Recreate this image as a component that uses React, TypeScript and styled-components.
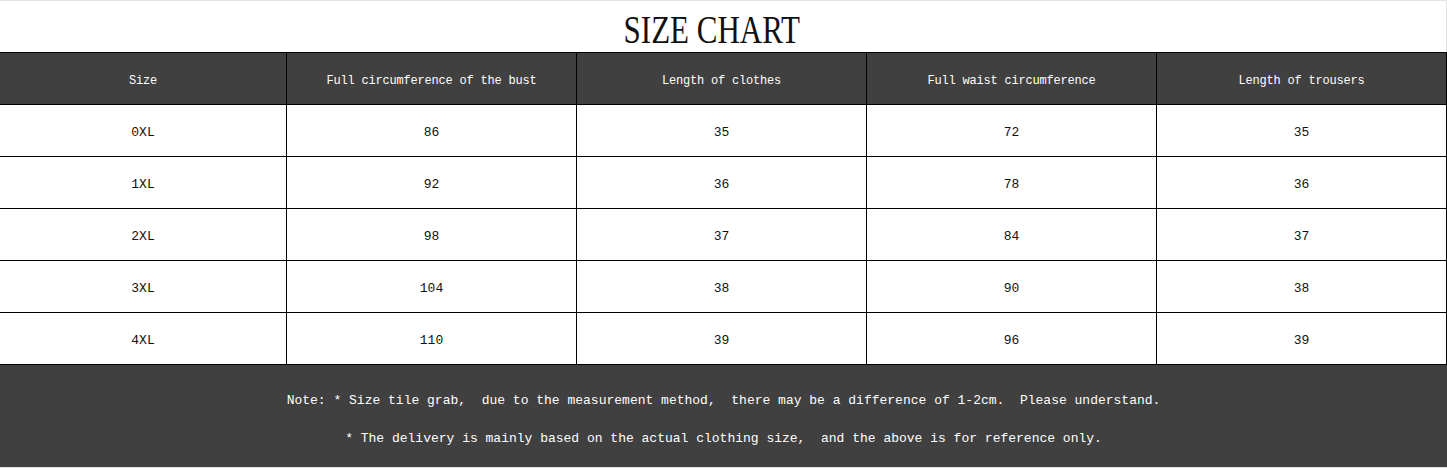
import React from "react";
import styled, { createGlobalStyle } from "styled-components";

const GlobalStyle = createGlobalStyle`
  html, body {
    margin: 0;
    padding: 0;
    background: #ffffff;
  }
`;

const Sheet = styled("div")`
  width: 1447px;
  border-top: 1px solid #e2e2e2;
  font-family: "Liberation Mono", "DejaVu Sans Mono", monospace;
`;

const TitleBar = styled("div")`
  width: 1446px;
  height: 51px;
  border-right: 1px solid #e2e2e2;
  display: flex;
  align-items: center;
  justify-content: center;
`;

const Title = styled("h1")`
  margin: 0 0 0 -22px;
  font-family: "Liberation Serif", "DejaVu Serif", serif;
  font-weight: normal;
  font-size: 40px;
  line-height: 40px;
  color: #111111;
  transform: scaleX(0.775);
  padding-top: 6px;
`;

const Grid = styled("div")`
  display: grid;
  grid-template-columns: 286px repeat(4, 289px);
  grid-auto-rows: 51px;
  gap: 1px;
  background: #000000;
  border-top: 1px solid #000000;
  border-right: 1px solid #000000;
  border-bottom: 1px solid #000000;
`;

const Cell = styled("div")<{ $head?: boolean }>`
  display: flex;
  align-items: center;
  justify-content: center;
  background: ${(p) => (p.$head ? "#404040" : "#ffffff")};
  color: ${(p) => (p.$head ? "#ffffff" : "#111111")};
  font-size: ${(p) => (p.$head ? "12px" : "13px")};
  letter-spacing: ${(p) => (p.$head ? "-0.2px" : "0")};
  padding-top: 4px;
`;

const Footer = styled("div")`
  height: 103px;
  background: #404040;
  border-bottom: 1px solid #e2e2e2;
  display: flex;
  flex-direction: column;
  align-items: center;
  justify-content: center;
  gap: 22px;
  padding-top: 7px;
  box-sizing: border-box;
`;

const Note = styled("p")`
  margin: 0;
  color: #ffffff;
  font-size: 13px;
  line-height: 16px;
  white-space: pre;
`;

const headers = [
  "Size",
  "Full circumference of the bust",
  "Length of clothes",
  "Full waist circumference",
  "Length of trousers",
];

const rows = [
  ["0XL", "86", "35", "72", "35"],
  ["1XL", "92", "36", "78", "36"],
  ["2XL", "98", "37", "84", "37"],
  ["3XL", "104", "38", "90", "38"],
  ["4XL", "110", "39", "96", "39"],
];

export default function App() {
  return (
    <>
      <GlobalStyle />
      <Sheet>
        <TitleBar>
          <Title>SIZE CHART</Title>
        </TitleBar>
        <Grid>
          {headers.map((h) => (
            <Cell key={h} $head>
              {h}
            </Cell>
          ))}
          {rows.map((r) =>
            r.map((v, i) => <Cell key={r[0] + i}>{v}</Cell>)
          )}
        </Grid>
        <Footer>
          <Note>
            Note: * Size tile grab,  due to the measurement method,  there may be a difference of 1-2cm.  Please understand.
          </Note>
          <Note>
            * The delivery is mainly based on the actual clothing size,  and the above is for reference only.
          </Note>
        </Footer>
      </Sheet>
    </>
  );
}
